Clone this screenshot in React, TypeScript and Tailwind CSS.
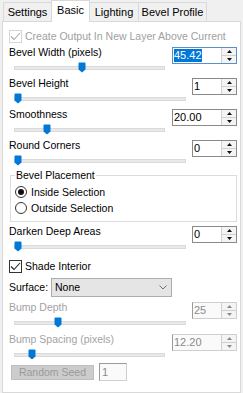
import React from "react";

function Thumb({ pos }: { pos: number }) {
  return (
    <svg
      width="8"
      height="11"
      viewBox="0 0 8 11"
      className="absolute top-0"
      style={{ left: pos }}
    >
      <path d="M0.5 1.5 Q0.5 0.5 1.5 0.5 H6.5 Q7.5 0.5 7.5 1.5 V7.5 L4 10.5 L0.5 7.5 Z" fill="#0078d7" />
    </svg>
  );
}

function Slider({ pos }: { pos: number }) {
  return (
    <div className="relative mt-[3px] h-[11px] mx-[5px] pt-[4px]">
      <div className="h-[4px] bg-[#e9e9e9] border border-[#dadada]" />
      <Thumb pos={pos} />
    </div>
  );
}

function Arrow({ up, color }: { up?: boolean; color: string }) {
  return (
    <svg width="5" height="3" viewBox="0 0 5 3">
      <path d={up ? "M0 3 L2.5 0 L5 3 Z" : "M0 0 L2.5 3 L5 0 Z"} fill={color} />
    </svg>
  );
}

function Spin({
  value,
  wide,
  selected,
  disabled,
}: {
  value: string;
  wide?: boolean;
  selected?: boolean;
  disabled?: boolean;
}) {
  return (
    <div
      className={`flex h-[17px] border ${wide ? "w-[65px]" : "w-[45px]"} ${
        disabled ? "border-[#cfcfcf] border-l-[#9a9a9a] bg-[#fafafa]" : selected ? "border-[#5b8fc7] bg-white" : "border-[#8a8a8a] bg-white"
      }`}
    >
      <div className="flex-1 flex items-center pl-[1px] text-[11px] leading-[13px]">
        <span className={selected ? "bg-[#0078d7] text-white" : disabled ? "text-[#8a8a8a]" : "text-black"}>
          {value}
        </span>
      </div>
      <div className="w-[15px] flex flex-col border-l border-[#d0d0d0] bg-[#f4f4f4]">
        <div className="flex-1 flex items-center justify-center border-b border-[#d0d0d0]">
          <Arrow up color={disabled ? "#8a8a8a" : "#111"} />
        </div>
        <div className="flex-1 flex items-center justify-center">
          <Arrow color={disabled ? "#8a8a8a" : "#111"} />
        </div>
      </div>
    </div>
  );
}

function Block({
  label,
  value,
  wide,
  pos,
  selected,
  disabled,
  h,
}: {
  label: string;
  value: string;
  wide?: boolean;
  pos: number;
  selected?: boolean;
  disabled?: boolean;
  h: string;
}) {
  return (
    <div className={`flex ${h}`}>
      <div className={`${wide ? "w-[161px]" : "w-[182px]"} flex flex-col`}>
        <div className={`h-[13px] ${disabled ? "text-[#a3a3a3]" : "text-black"}`}>{label}</div>
        <Slider pos={pos} />
      </div>
      <div className="ml-auto mt-[1px]">
        <Spin value={value} wide={wide} selected={selected} disabled={disabled} />
      </div>
    </div>
  );
}

function Check({ disabled }: { disabled?: boolean }) {
  return (
    <div
      className={`w-[13px] h-[13px] border flex items-center justify-center bg-white ${
        disabled ? "border-[#d6d6d6]" : "border-[#333333]"
      }`}
    >
      <svg width="11" height="9" viewBox="0 0 11 9">
        <path d="M1 4.5 L4 7.5 L10 1" fill="none" stroke={disabled ? "#a8a8a8" : "#222"} strokeWidth="1.1" />
      </svg>
    </div>
  );
}

function Radio({ checked, label }: { checked?: boolean; label: string }) {
  return (
    <div className="h-[16px] flex items-center">
      <div className="w-[12px] h-[12px] rounded-full border border-[#333333] bg-white flex items-center justify-center">
        {checked && <div className="w-[6px] h-[6px] rounded-full bg-[#111]" />}
      </div>
      <span className="ml-[4px]">{label}</span>
    </div>
  );
}

function Tab({ label, w }: { label: string; w: string }) {
  return (
    <div className={`${w} h-[19px] -ml-px first:ml-0 border border-b-0 border-[#d9d9d9] bg-[#f0f0f0] flex justify-center pt-[3px]`}>
      {label}
    </div>
  );
}

export default function App() {
  return (
    <div className="w-[243px] h-[393px] bg-[#f0f0f0] overflow-hidden font-['Liberation_Sans',Arial,sans-serif] text-[10.5px] leading-[13px] text-black">
      <div className="flex items-end h-[21px] pl-[3px] text-[11px]">
        <Tab label="Settings" w="w-[49px]" />
        <div className="relative z-10 -mb-px -ml-px h-[22px] w-[39px] bg-white border border-b-0 border-[#d9d9d9] flex justify-center pt-[3px]">
          Basic
        </div>
        <Tab label="Lighting" w="w-[50px]" />
        <Tab label="Bevel Profile" w="w-[69px]" />
      </div>
      <div className="ml-[2px] w-[239px] h-[372px] bg-white border border-[#d9d9d9] pl-[6px] pr-[3px] flex flex-col">
        <div className="mt-[8px] h-[13px] flex items-center text-[#a0a0a0]">
          <Check disabled />
          <span className="ml-[3px]">Create Output In New Layer Above Current</span>
        </div>
        <div className="mt-[3px]">
          <Block label="Bevel Width (pixels)" value="45.42" wide pos={64} selected h="h-[31px]" />
          <Block label="Bevel Height" value="1" pos={0} h="h-[31px]" />
          <Block label="Smoothness" value="20.00" wide pos={29} h="h-[31px]" />
          <Block label="Round Corners" value="0" pos={0} h="h-[30px]" />
        </div>
        <fieldset className="ml-[1px] h-[53px] border border-[#dcdcdc] pl-[4px]">
          <legend className="px-[1px] leading-[12px]">Bevel Placement</legend>
          <div className="pt-[3px]">
            <Radio checked label="Inside Selection" />
            <Radio label="Outside Selection" />
          </div>
        </fieldset>
        <div className="mt-[3px]">
          <Block label="Darken Deep Areas" value="0" pos={0} h="h-[31px]" />
        </div>
        <div className="mt-[4px] h-[13px] flex items-center">
          <Check />
          <span className="ml-[3px]">Shade Interior</span>
        </div>
        <div className="mt-[5px] h-[19px] flex items-center">
          <span className="w-[42px]">Surface:</span>
          <div className="w-[121px] h-[19px] border border-[#adadad] bg-[#e5e5e5] flex items-center justify-between pl-[3px] pr-[4px]">
            <span>None</span>
            <svg width="8" height="5" viewBox="0 0 8 5">
              <path d="M0.5 0.5 L4 4 L7.5 0.5" fill="none" stroke="#707070" strokeWidth="1" />
            </svg>
          </div>
        </div>
        <div className="mt-[4px]">
          <Block label="Bump Depth" value="25" pos={40} disabled h="h-[32px]" />
          <Block label="Bump Spacing (pixels)" value="12.20" wide pos={14} disabled h="h-[30px]" />
        </div>
        <div className="h-[18px] flex items-center pl-[2px]">
          <div className="w-[83px] h-[15px] bg-[#cccccc] border border-[#bfbfbf] text-[#9a9a9a] flex items-center justify-center">
            Random Seed
          </div>
          <div className="ml-[5px] w-[28px] h-[18px] border border-[#cfcfcf] border-l-[#9a9a9a] border-t-[#9a9a9a] bg-[#fafafa] text-[#8a8a8a] text-[11px] flex items-center pl-[2px]">
            1
          </div>
        </div>
      </div>
    </div>
  );
}
